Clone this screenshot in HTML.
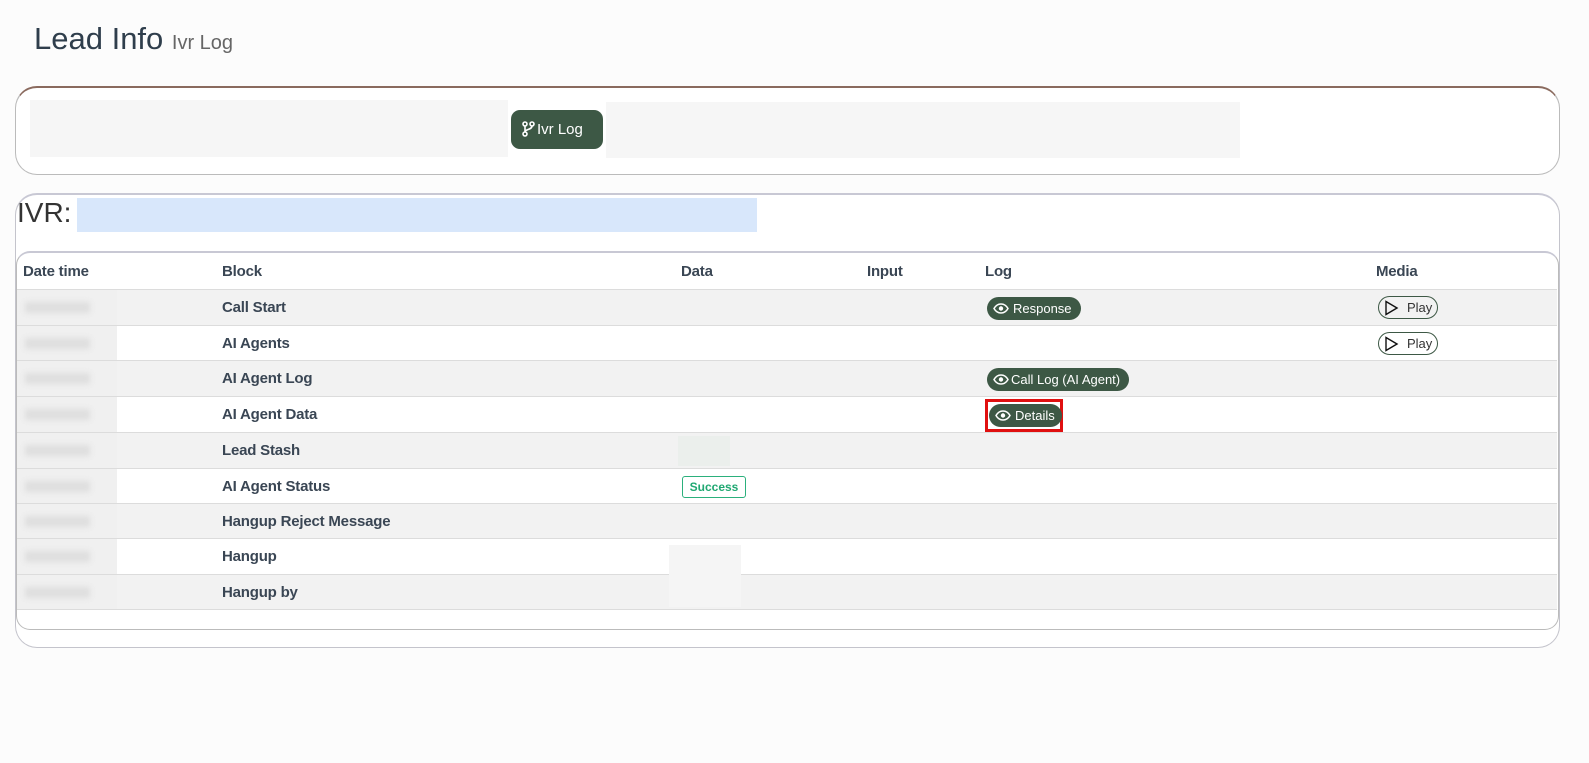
<!DOCTYPE html>
<html><head><meta charset="utf-8"><style>
*{box-sizing:border-box;margin:0;padding:0}
body{width:1589px;height:763px;background:#fcfcfc;font-family:"Liberation Sans",sans-serif;color:#3a4654;position:relative;overflow:hidden}
.a{position:absolute}
.row{position:absolute;left:17px;width:1540px;height:36px;border-bottom:1px solid #dcdcdc}
.row span{position:absolute;top:9px;font-weight:bold;font-size:15px;letter-spacing:-0.2px}
.g{background:#f2f2f2}
.pill{position:absolute;background:#3d5845;color:#fff;border-radius:12px;height:23px;font-size:13px;line-height:23px;padding:0 9px 0 26px}
.pill svg{position:absolute;left:6px;top:6px}
.play{position:absolute;left:1361px;top:6px;width:60px;height:23px;border:1px solid #3d5845;border-radius:12px;font-size:13px;line-height:21px;padding-left:28px;color:#333}
.play svg{position:absolute;left:4px;top:3px}
.d{position:absolute;left:0;top:0;width:100px;height:100%;background:#f0f0f0}
.d i{position:absolute;left:8px;top:12px;width:65px;height:11px;background:#dedede;filter:blur(3px)}
</style></head><body>
<div class="a" style="left:34px;top:21px;font-size:31px;color:#2f3e4c">Lead Info <span style="font-size:20px;color:#666">Ivr Log</span></div>

<div class="a" style="left:15px;top:86px;width:1545px;height:89px;border:1px solid #bbb;border-top:2px solid #8a6a5e;border-radius:22px;background:#fff"></div>
<div class="a" style="left:30px;top:100px;width:478px;height:57px;background:#f6f6f6"></div>
<div class="a" style="left:606px;top:102px;width:634px;height:56px;background:#f6f6f6"></div>
<div class="a" style="left:511px;top:110px;width:92px;height:39px;background:#3d5845;border-radius:9px;color:#fff;font-size:15px;line-height:39px;padding-left:26px">Ivr Log
<svg class="a" style="left:11px;top:11px" width="13" height="16" viewBox="0 0 13 16" fill="none" stroke="#fff" stroke-width="1.6"><circle cx="3" cy="3" r="2"/><circle cx="10" cy="3" r="2"/><circle cx="3" cy="13" r="2"/><path d="M3 5v6M10 5c0 4-7 3-7 6"/></svg></div>

<div class="a" style="left:15px;top:193px;width:1545px;height:455px;border:1px solid #c4c4cc;border-top:2px solid #c8c8d4;border-radius:22px;background:#fff"></div>
<div class="a" style="left:17px;top:197px;font-size:28px;color:#333">IVR:</div>
<div class="a" style="left:77px;top:198px;width:680px;height:34px;background:#d8e7fb"></div>
<div class="a" style="left:16px;top:251px;width:1543px;height:379px;border:1px solid #bbb;border-top:2px solid #c8c8d4;border-radius:14px"></div>

<div class="row" style="top:253px;height:37px">
<span style="left:6px;top:10px">Date time</span><span style="left:205px;top:10px">Block</span><span style="left:664px;top:10px">Data</span><span style="left:850px;top:10px">Input</span><span style="left:968px;top:10px">Log</span><span style="left:1359px;top:10px">Media</span></div>

<div class="row g" style="top:290px"><div class="d"><i></i></div><span style="left:205px">Call Start</span>
<div class="pill" style="left:970px;top:7px">Response<svg width="16" height="11" viewBox="0 0 16 11"><path d="M1 5.5C3 2 5.5 1 8 1s5 1 7 4.5C13 9 10.5 10 8 10S3 9 1 5.5z" fill="none" stroke="#fff" stroke-width="1.5"/><circle cx="8" cy="5.5" r="2.2" fill="#fff"/></svg></div>
<div class="play">Play<svg width="16" height="16" viewBox="0 0 16 16"><path d="M3 1.5l11 6.5-11 6.5z" fill="none" stroke="#111" stroke-width="1.4"/></svg></div></div>
<div class="row" style="top:326px;height:35px"><div class="d"><i></i></div><span style="left:205px">AI Agents</span>
<div class="play">Play<svg width="16" height="16" viewBox="0 0 16 16"><path d="M3 1.5l11 6.5-11 6.5z" fill="none" stroke="#111" stroke-width="1.4"/></svg></div></div>
<div class="row g" style="top:361px"><div class="d"><i></i></div><span style="left:205px">AI Agent Log</span>
<div class="pill" style="left:970px;top:7px;padding-left:24px">Call Log (AI Agent)<svg width="16" height="11" viewBox="0 0 16 11"><path d="M1 5.5C3 2 5.5 1 8 1s5 1 7 4.5C13 9 10.5 10 8 10S3 9 1 5.5z" fill="none" stroke="#fff" stroke-width="1.5"/><circle cx="8" cy="5.5" r="2.2" fill="#fff"/></svg></div></div>
<div class="row" style="top:397px"><div class="d"><i></i></div><span style="left:205px">AI Agent Data</span>
<div class="a" style="left:968px;top:2px;width:78px;height:33px;border:3px solid #e01010"></div>
<div class="pill" style="left:972px;top:7px;padding-right:7px">Details<svg width="16" height="11" viewBox="0 0 16 11"><path d="M1 5.5C3 2 5.5 1 8 1s5 1 7 4.5C13 9 10.5 10 8 10S3 9 1 5.5z" fill="none" stroke="#fff" stroke-width="1.5"/><circle cx="8" cy="5.5" r="2.2" fill="#fff"/></svg></div></div>
<div class="row g" style="top:433px"><div class="d"><i></i></div><span style="left:205px">Lead Stash</span><div class="a" style="left:661px;top:3px;width:52px;height:30px;background:#ebefec"></div></div>
<div class="row" style="top:469px;height:35px"><div class="d"><i></i></div><span style="left:205px">AI Agent Status</span>
<div class="a" style="left:665px;top:7px;width:64px;height:22px;border:1px solid #2bb07c;border-radius:3px;color:#20a872;font-size:12px;font-weight:bold;line-height:20px;text-align:center">Success</div></div>
<div class="row g" style="top:504px;height:35px"><div class="d"><i></i></div><span style="left:205px">Hangup Reject Message</span></div>
<div class="row" style="top:539px"><div class="d"><i></i></div><span style="left:205px">Hangup</span></div>
<div class="row g" style="top:575px;height:35px"><div class="d"><i></i></div><span style="left:205px">Hangup by</span></div>
<div class="a" style="left:669px;top:545px;width:72px;height:62px;background:#f5f5f5"></div>
</body></html>
